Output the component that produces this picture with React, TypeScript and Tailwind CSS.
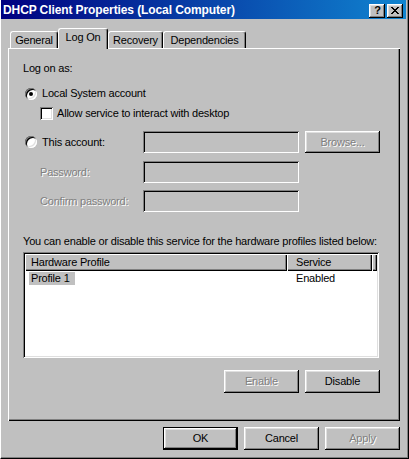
import React from "react";

const raised =
  "shadow-[inset_-1px_-1px_#000,inset_1px_1px_#fff,inset_-2px_-2px_#808080,inset_2px_2px_#dfdfdf]";
const sunken =
  "shadow-[inset_1px_1px_#808080,inset_-1px_-1px_#fff,inset_2px_2px_#000,inset_-2px_-2px_#dfdfdf]";
const editSunken =
  "shadow-[inset_1px_1px_#808080,inset_-1px_-1px_#fff,inset_2px_2px_#000,inset_-2px_-2px_#c0c0c0]";
const disabledText = "text-[#808080] [text-shadow:1px_1px_0_#fff]";

function Button({
  children,
  disabled,
  isDefault,
}: {
  children: React.ReactNode;
  disabled?: boolean;
  isDefault?: boolean;
}) {
  return (
    <div
      className={`w-[75px] h-[23px] bg-[#c0c0c0] flex items-center justify-center ${raised} ${
        isDefault ? "border border-black" : ""
      } ${disabled ? disabledText : ""}`}
    >
      {children}
    </div>
  );
}

function Radio({ checked }: { checked?: boolean }) {
  return (
    <div
      className={`w-[12px] h-[12px] rounded-full bg-white flex items-center justify-center shrink-0 ${sunken}`}
    >
      {checked && <div className="w-[4px] h-[4px] rounded-full bg-black" />}
    </div>
  );
}

function Edit() {
  return <div className={`w-[156px] h-[22px] bg-[#c0c0c0] ${editSunken}`} />;
}

function Tab({
  children,
  width,
  selected,
}: {
  children: React.ReactNode;
  width: string;
  selected?: boolean;
}) {
  return (
    <div
      className={`${width} ${
        selected ? "h-[21px] relative z-10" : "h-[17px] mb-[1px]"
      } bg-[#c0c0c0] border-l border-t border-white border-r border-r-black rounded-t-[3px] shadow-[inset_-1px_0_#808080] flex justify-center pt-[2px]`}
    >
      {children}
    </div>
  );
}

export default function App() {
  return (
    <div className="w-[409px] h-[459px] bg-[#c0c0c0] flex flex-col border-l border-l-white border-r border-r-black border-b border-b-black shadow-[inset_-1px_-1px_#808080] text-[11px] leading-[13px] text-black tracking-[-0.2px] font-['Liberation_Sans',Arial,sans-serif]">
      {/* Title bar */}
      <div className="h-[19px] mr-[2px] flex items-center pl-[2px] pr-[3px] bg-[linear-gradient(to_right,#000080,#1084d0)]">
        <div className="flex-1 text-white font-bold text-[12px] tracking-[-0.1px] pt-[2px]">
          DHCP Client Properties (Local Computer)
        </div>
        <div className="flex gap-[2px] pt-[2px]">
          <div
            className={`w-[16px] h-[14px] bg-[#c0c0c0] ${raised} flex items-center justify-center font-bold text-[11px] leading-none pl-[1px]`}
          >
            ?
          </div>
          <div
            className={`w-[16px] h-[14px] bg-[#c0c0c0] ${raised} flex items-center justify-center`}
          >
            <svg width="8" height="7" viewBox="0 0 8 7" shapeRendering="crispEdges">
              <path
                d="M0 0h2v1h-2zM6 0h2v1h-2zM1 1h2v1h-2zM5 1h2v1h-2zM2 2h4v1h-4zM3 3h2v1h-2zM2 4h4v1h-4zM1 5h2v1h-2zM5 5h2v1h-2zM0 6h2v1h-2zM6 6h2v1h-2z"
                fill="#000"
              />
            </svg>
          </div>
        </div>
      </div>

      {/* Tabs */}
      <div className="flex items-end h-[21px] mt-[9px] pl-[9px]">
        <Tab width="w-[48px]">General</Tab>
        <Tab width="w-[50px]" selected>
          Log On
        </Tab>
        <Tab width="w-[55px]">Recovery</Tab>
        <Tab width="w-[83px]">Dependencies</Tab>
      </div>

      {/* Panel */}
      <div className="ml-[7px] -mt-[1px] w-[392px] h-[373px] shrink-0 bg-[#c0c0c0] shadow-[inset_1px_1px_#fff,inset_-1px_-1px_#000,inset_-2px_-2px_#808080] pl-[15px] pt-[14px] flex flex-col">
        <div>Log on as:</div>

        <div className="flex items-center mt-[12px] h-[13px]">
          <div className="ml-[2px]">
            <Radio checked />
          </div>
          <div className="ml-[5px]">Local System account</div>
        </div>

        <div className="flex items-center mt-[7px] h-[13px]">
          <div className={`ml-[17px] w-[13px] h-[13px] bg-white ${sunken}`} />
          <div className="ml-[4px]">Allow service to interact with desktop</div>
        </div>

        <div className="flex items-center mt-[11px] h-[22px]">
          <div className="ml-[2px]">
            <Radio />
          </div>
          <div className="ml-[5px] w-[101px]">This account:</div>
          <Edit />
          <div className="ml-[6px]">
            <div
              className={`w-[75px] h-[22px] flex items-center justify-center ${raised} ${disabledText}`}
            >
              Browse...
            </div>
          </div>
        </div>

        <div className="flex items-center mt-[8px] h-[22px]">
          <div className={`ml-[17px] w-[103px] ${disabledText}`}>Password:</div>
          <Edit />
        </div>

        <div className="flex items-center mt-[7px] h-[22px]">
          <div className={`ml-[17px] w-[103px] ${disabledText}`}>Confirm password:</div>
          <Edit />
        </div>

        <div className="mt-[23px]">
          You can enable or disable this service for the hardware profiles listed below:
        </div>

        {/* List */}
        <div className={`mt-[4px] w-[356px] h-[106px] bg-white p-[2px] ${sunken}`}>
          <div className="flex h-[17px]">
            <div className="w-[262px] h-full bg-[#c0c0c0] shadow-[inset_1px_1px_#fff,inset_-1px_-1px_#000,inset_-2px_-2px_#808080] pl-[6px] flex items-center">
              Hardware Profile
            </div>
            <div className="w-[85px] h-full bg-[#c0c0c0] shadow-[inset_1px_1px_#fff,inset_-1px_-1px_#000,inset_-2px_-2px_#808080] pl-[9px] flex items-center">
              Service
            </div>
            <div className="flex-1 h-full bg-[#c0c0c0] shadow-[inset_1px_1px_#fff,inset_-1px_-1px_#000,inset_-2px_-2px_#808080]" />
          </div>
          <div className="flex h-[13px] mt-[1px]">
            <div className="w-[262px] pl-[4px]">
              <div className="w-[46px] h-[13px] bg-[#c0c0c0] pl-[2px]">Profile 1</div>
            </div>
            <div className="pl-[9px]">Enabled</div>
          </div>
        </div>

        <div className="flex justify-end gap-[6px] mt-[12px] pr-[20px]">
          <Button disabled>Enable</Button>
          <Button>Disable</Button>
        </div>
      </div>

      {/* Bottom buttons */}
      <div className="flex justify-end gap-[6px] mt-[6px] pr-[8px]">
        <Button isDefault>OK</Button>
        <Button>Cancel</Button>
        <Button disabled>Apply</Button>
      </div>
    </div>
  );
}
